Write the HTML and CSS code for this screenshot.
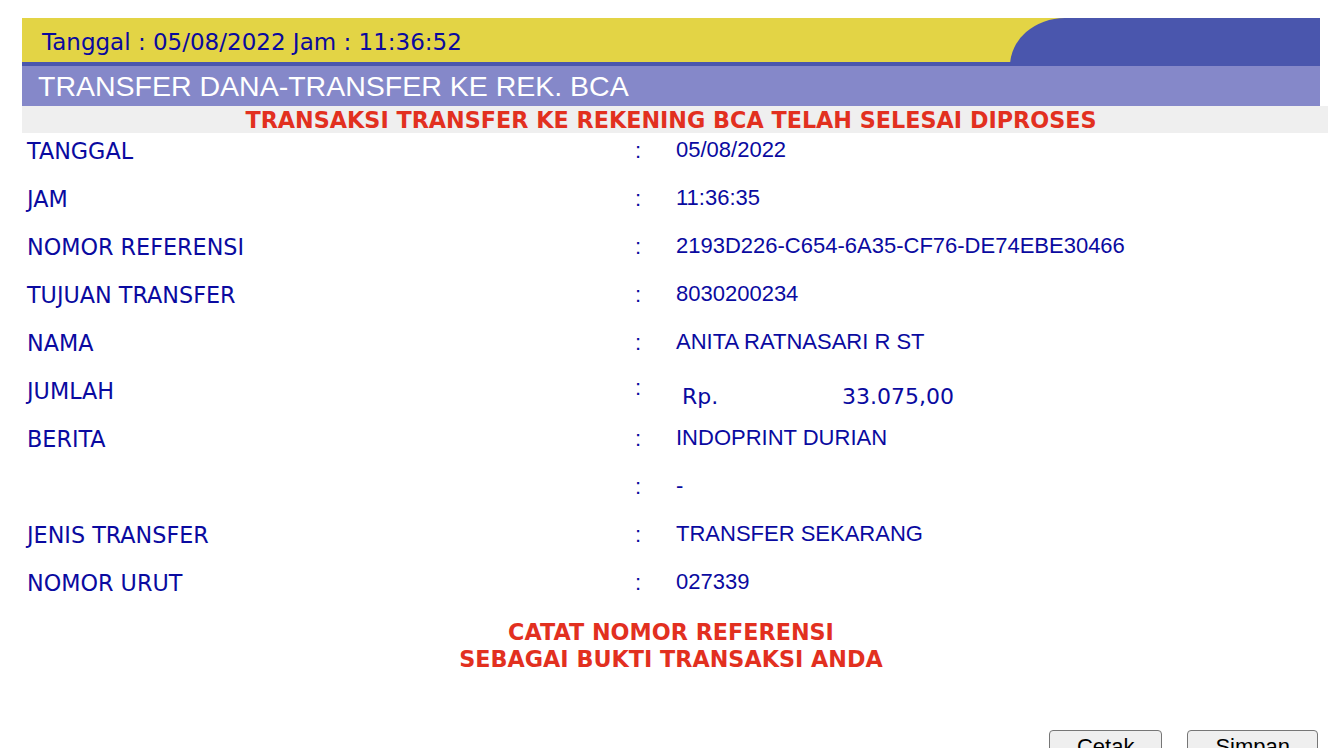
FILE: index.html
```html
<!DOCTYPE html>
<html lang="id">
<head>
<meta charset="utf-8">
<title>Transfer Dana</title>
<link rel="stylesheet" href="styles.css">
</head>
<body>
<div class="page">
  <div class="topbar">
    <div class="topbar-date">Tanggal : 05/08/2022 Jam : 11:36:52</div>
    <div class="topbar-arc"></div>
  </div>
  <div class="title">TRANSFER DANA-TRANSFER KE REK. BCA</div>
  <div class="notice">TRANSAKSI TRANSFER KE REKENING BCA TELAH SELESAI DIPROSES</div>

  <div class="rows">
    <div class="row"><div class="label">TANGGAL</div><div class="colon">:</div><div class="value">05/08/2022</div></div>
    <div class="row"><div class="label">JAM</div><div class="colon">:</div><div class="value">11:36:35</div></div>
    <div class="row"><div class="label">NOMOR REFERENSI</div><div class="colon">:</div><div class="value">2193D226-C654-6A35-CF76-DE74EBE30466</div></div>
    <div class="row"><div class="label">TUJUAN TRANSFER</div><div class="colon">:</div><div class="value">8030200234</div></div>
    <div class="row"><div class="label">NAMA</div><div class="colon">:</div><div class="value">ANITA RATNASARI R ST</div></div>
    <div class="row"><div class="label">JUMLAH</div><div class="colon colon-high">:</div><div class="amount"><span class="currency">Rp.</span><span class="sum">33.075,00</span></div></div>
    <div class="row"><div class="label">BERITA</div><div class="colon">:</div><div class="value">INDOPRINT DURIAN</div></div>
    <div class="row"><div class="label"></div><div class="colon">:</div><div class="value">-</div></div>
    <div class="row"><div class="label">JENIS TRANSFER</div><div class="colon">:</div><div class="value">TRANSFER SEKARANG</div></div>
    <div class="row"><div class="label">NOMOR URUT</div><div class="colon">:</div><div class="value">027339</div></div>
  </div>

  <div class="reminder">CATAT NOMOR REFERENSI<br>SEBAGAI BUKTI TRANSAKSI ANDA</div>

  <div class="actions">
    <button class="btn" type="button">Cetak</button>
    <button class="btn" type="button">Simpan</button>
  </div>
</div>
</body>
</html>
```

FILE: styles.css
```css
html, body {
  margin: 0;
  padding: 0;
  background: #ffffff;
}

.page {
  padding: 18px 10px 0 22px;
  font-family: "Liberation Sans", Arial, sans-serif;
}

.topbar {
  display: flex;
  height: 48px;
  background: linear-gradient(to bottom, #e3d445 0, #e3d445 44px, #4a56ad 44px, #4a56ad 48px);
}

.topbar-date {
  flex: 1;
  padding-left: 20px;
  font-family: "DejaVu Sans", Verdana, sans-serif;
  font-size: 23px;
  line-height: 28px;
  padding-top: 10px;
  color: #0a0a9e;
  white-space: nowrap;
}

.topbar-arc {
  width: 310px;
  background: #4a56ad;
  border-top-left-radius: 55px 48px;
}

.title {
  height: 40px;
  line-height: 40px;
  padding-left: 16px;
  background: #8588c9;
  color: #ffffff;
  font-family: "Liberation Sans", Arial, sans-serif;
  font-size: 28.5px;
  white-space: nowrap;
}

.notice {
  height: 26px;
  padding-top: 1px;
  line-height: 26px;
  margin-right: -8px;
  padding-right: 8px;
  background: #efefef;
  text-align: center;
  color: #e2301f;
  font-family: "DejaVu Sans", Verdana, sans-serif;
  font-weight: bold;
  font-size: 22.3px;
  white-space: nowrap;
}

.rows {
  padding-left: 5px;
}

.row {
  display: grid;
  grid-template-columns: 608px 41px 1fr;
  height: 48px;
  color: #0a0aa0;
}

.label {
  font-family: "DejaVu Sans", Verdana, sans-serif;
  font-size: 22.3px;
  line-height: 26px;
  padding-top: 5px;
  white-space: nowrap;
}

.colon {
  font-family: "Liberation Sans", Arial, sans-serif;
  font-size: 22px;
  line-height: 26px;
  padding-top: 5px;
}

.colon-high {
  padding-top: 2px;
}

.value {
  font-family: "Liberation Sans", Arial, sans-serif;
  font-size: 22px;
  line-height: 26px;
  padding-top: 4px;
  white-space: nowrap;
}

.amount {
  display: flex;
  padding-top: 11px;
  padding-left: 6px;
  font-family: "DejaVu Sans", Verdana, sans-serif;
  font-size: 22px;
  line-height: 26px;
  white-space: nowrap;
}

.currency {
  width: 160px;
}

.reminder {
  margin-top: 6px;
  text-align: center;
  color: #e2301f;
  font-family: "DejaVu Sans", Verdana, sans-serif;
  font-weight: bold;
  font-size: 22.3px;
  line-height: 27px;
}

.actions {
  display: flex;
  justify-content: flex-end;
  gap: 25px;
  margin-top: 57px;
  padding-right: 2px;
}

.btn {
  font-family: "Liberation Sans", Arial, sans-serif;
  font-size: 22px;
  line-height: 25px;
  padding: 3px 27px 9px;
  border: 1px solid #767676;
  border-radius: 4px;
  background: #efefef;
  color: #000000;
}
```
